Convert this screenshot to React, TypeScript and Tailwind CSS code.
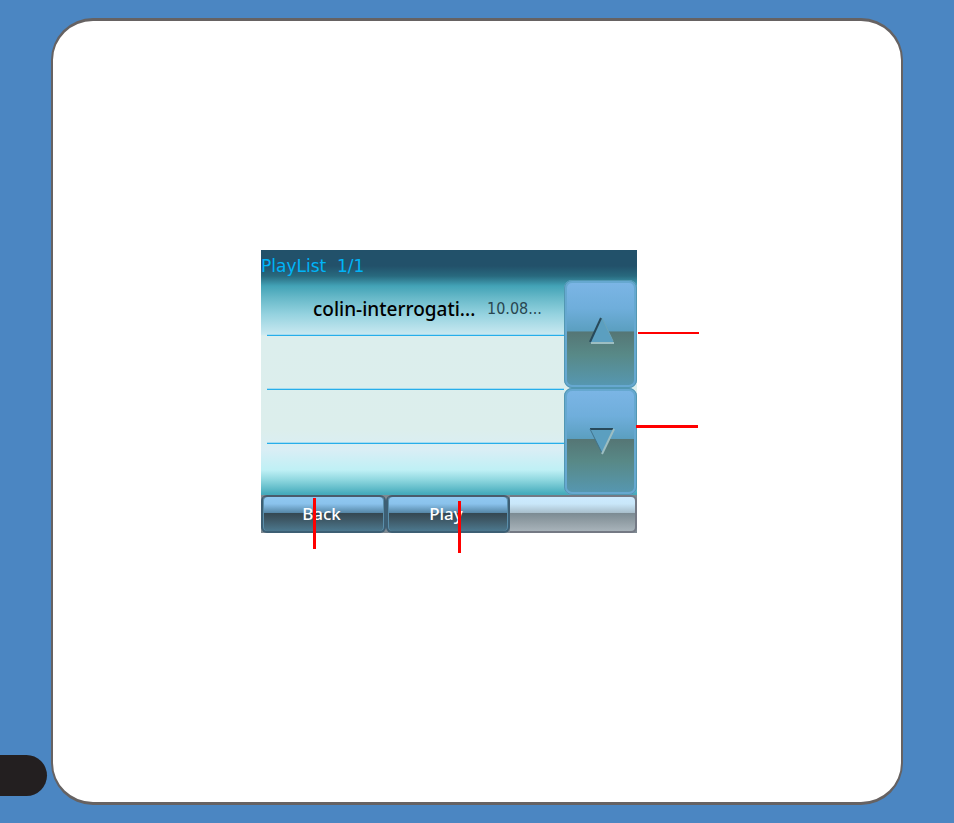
import type { ReactNode } from 'react';

type Track = { title: string; date: string };

const TRACKS: (Track | null)[] = [
    { title: 'colin-interrogati...', date: '10.08...' },
    null,
    null,
    null,
];

const ScrollButton = ({ label, children }: { label: string; children: ReactNode }) => (
    <button
        type="button"
        aria-label={label}
        className="flex flex-1 items-center justify-center rounded-lg border-3 border-[#66a8d0] bg-[linear-gradient(#7bb5e5_0%,#6faedb_25%,#5b9fc0_47%,#557675_48%,#588987_70%,#5697b0_100%)] outline outline-[#5297b2] -outline-offset-1"
    >
        {children}
    </button>
);

const SoftKey = ({ children }: { children: ReactNode }) => (
    <button
        type="button"
        className="rounded-md border-2 border-[#3d5f74] border-t-[#4a5b6b] bg-[linear-gradient(#8fc8f0_0%,#8ac2ec_20%,#5788a8_46%,#354852_48%,#3d5663_65%,#4c788e_100%)] pr-1 text-[17px] leading-5 font-medium text-white shadow-[inset_1px_0_#5a8eaa,inset_-1px_0_#5a8eaa]"
    >
        {children}
    </button>
);

// Red leader lines that point at the controls of the player
const Callouts = () => (
    <div className="pointer-events-none">
        <span className="absolute top-[82px] left-[377px] h-[2px] w-[61px] bg-[#ff0000]" />
        <span className="absolute top-[175px] left-[375px] h-[3px] w-[62px] bg-[#ff0000]" />
        <span className="absolute top-[248px] left-[52px] h-[51px] w-[3px] bg-[#ff0000]" />
        <span className="absolute top-[251px] left-[197px] h-[52px] w-[3px] bg-[#ff0000]" />
    </div>
);

const Player = () => (
    <section className="relative w-[376px] bg-[linear-gradient(#22516a_0px,#22516a_16px,#28697e_26px,#43a3b7_36px,#68b9c9_48px,#94d2df_64px,#c8e8f0_84px,#dceeed_86px,#dceeec_180px,#d9eef5_200px,#bff0f5_220px,#8ed7df_230px,#45abbc_244px)]">
        <h1 className="h-[30px] pt-[6px] font-['DejaVu_Sans',sans-serif] text-[17px] leading-5 whitespace-pre text-[#00b4f8]">
            PlayList  1/1
        </h1>

        <div className="flex">
            <ul className="flex-1 pl-[6px]">
                {TRACKS.map((track, i) => (
                    <li
                        key={i}
                        className="flex h-[54px] items-center pt-[2px] pl-[46px] shadow-[inset_0_-1px_#27aeea,inset_0_-2px_#a5dcf0] first:h-[56px] last:h-[51px] last:shadow-none"
                    >
                        {track && (
                            <>
                                <span className="w-[174px] text-[19px] leading-6 font-medium text-black">{track.title}</span>
                                <span className="font-['DejaVu_Sans_Condensed','DejaVu_Sans',sans-serif] text-base leading-6 text-[#294650]">
                                    {track.date}
                                </span>
                            </>
                        )}
                    </li>
                ))}
            </ul>

            <div className="flex w-[73px] flex-col">
                <ScrollButton label="Scroll up">
                    <svg width="28" height="30" viewBox="0 0 28 30" className="mb-[6px]" aria-hidden="true">
                        <path d="M15 2 L27 27 H3 Z" fill="#5b9fc0" />
                        <path d="M15 2 L26 25" stroke="#6ba4b9" />
                        <path d="M3 26 L14 2" stroke="#28495a" strokeWidth="2" />
                        <path d="M4 27 H27" stroke="#9dbec2" strokeWidth="2" />
                    </svg>
                </ScrollButton>
                <ScrollButton label="Scroll down">
                    <svg width="28" height="30" viewBox="0 0 28 30" aria-hidden="true">
                        <path d="M3 2 H27 L15 27 Z" fill="#5b9fc0" />
                        <path d="M3 3 H26" stroke="#28495a" strokeWidth="2" />
                        <path d="M3 3 L15 27" stroke="#41738b" />
                        <path d="M27 3 L15 28" stroke="#9dbec2" strokeWidth="2" />
                    </svg>
                </ScrollButton>
            </div>
        </div>

        <div className="grid h-[38px] grid-cols-[125px_124px_1fr] bg-[#7f8a92]">
            <SoftKey>Back</SoftKey>
            <SoftKey>Play</SoftKey>
            <div className="rounded-r-md border-2 border-l-0 border-[#747984] bg-[linear-gradient(#cceaff_0%,#c9e7f9_20%,#a9bfcc_46%,#7c8b93_48%,#8f9ca3_70%,#a8b3ba_100%)]" />
        </div>

        <Callouts />
    </section>
);

export default function App() {
    return (
        <div className="flex min-h-screen bg-[#4b86c2] font-['Noto_Sans',sans-serif]">
            <aside className="flex w-[51px] items-end pb-[27px]">
                <div className="h-[41px] w-[47px] rounded-r-full bg-[#231f20]" />
            </aside>
            <main className="my-[18px] mr-[51px] flex-1 rounded-[42px] border-x-2 border-y-3 border-[#666262] bg-white pt-[229px] pl-[208px]">
                <Player />
            </main>
        </div>
    );
}
